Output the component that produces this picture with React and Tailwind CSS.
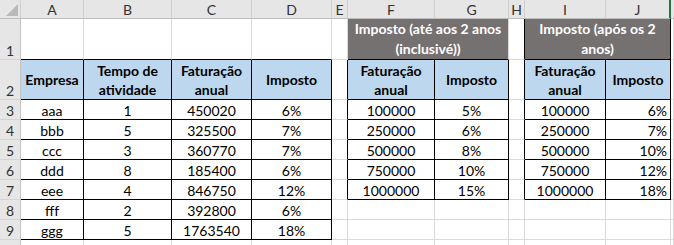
import clsx from "clsx";

const table1 = [
  ["aaa", "1", "450020", "6%"],
  ["bbb", "5", "325500", "7%"],
  ["ccc", "3", "360770", "7%"],
  ["ddd", "8", "185400", "6%"],
  ["eee", "4", "846750", "12%"],
  ["fff", "2", "392800", "6%"],
  ["ggg", "5", "1763540", "18%"],
];

const table2 = [
  ["100000", "5%"],
  ["250000", "6%"],
  ["500000", "8%"],
  ["750000", "10%"],
  ["1000000", "15%"],
];

const table3 = [
  ["100000", "6%"],
  ["250000", "7%"],
  ["500000", "10%"],
  ["750000", "12%"],
  ["1000000", "18%"],
];

// one spreadsheet cell; br / bb switch the right and bottom edge to a black border
function Cell({ children, br, bb, className }) {
  return (
    <div
      className={clsx(
        "flex min-w-0 border-r border-b whitespace-nowrap",
        br ? "border-r-black" : "border-r-[#dadada]",
        bb ? "border-b-black" : "border-b-[#dadada]",
        className
      )}
    >
      {children}
    </div>
  );
}

function RowNum({ n, className }) {
  return (
    <div
      className={clsx(
        "flex justify-center border-r border-b border-r-[#c4c4c4] border-b-[#d4d4d4] bg-[#e6e6e6] text-[#333] leading-[16px]",
        className
      )}
    >
      {n}
    </div>
  );
}

function ColHead({ label, last }) {
  return (
    <div
      className={clsx(
        "flex items-center justify-center border-b border-b-[#bdbdbd] bg-[#e6e6e6] text-[#333]",
        last ? "border-r-2 border-r-[#217346]" : "border-r border-r-[#cfcfcf]"
      )}
    >
      {label}
    </div>
  );
}

const head = "items-center justify-center text-center bg-[#bdd7ee] font-bold leading-[19px]";
const data = "items-end justify-center leading-[16px]";

export default function App() {
  const rows = [];

  // data rows 3..9
  for (let i = 0; i < 7; i++) {
    const t1 = table1[i];
    const t2 = table2[i];
    const t3 = table3[i];
    rows.push(
      <RowNum key={`rn${i}`} n={i + 3} className="items-end" />,
      <Cell key={`a${i}`} br bb className={data}>{t1[0]}</Cell>,
      <Cell key={`b${i}`} br bb className={data}>{t1[1]}</Cell>,
      <Cell key={`c${i}`} br bb className={data}>{t1[2]}</Cell>,
      <Cell key={`d${i}`} br bb className={data}>{t1[3]}</Cell>,
      <Cell key={`e${i}`} br={!!t2} className={data} />,
      <Cell key={`f${i}`} br={!!t2} bb={!!t2} className={data}>{t2 && t2[0]}</Cell>,
      <Cell key={`g${i}`} br={!!t2} bb={!!t2} className={data}>{t2 && t2[1]}</Cell>,
      <Cell key={`h${i}`} br={!!t3} className={data} />,
      <Cell key={`i${i}`} br={!!t3} bb={!!t3} className={data}>{t3 && t3[0]}</Cell>,
      <Cell key={`j${i}`} br={!!t3} bb={!!t3} className="items-end justify-end pr-[3px] leading-[16px]">
        {t3 && t3[1]}
      </Cell>,
      <Cell key={`k${i}`} />
    );
  }

  return (
    <div className="h-[245px] w-[674px] overflow-hidden bg-white font-['Lato','Liberation_Sans',sans-serif] text-[14px] text-black">
      <div className="grid grid-cols-[21px_63px_88px_80px_80px_16px_87px_74px_16px_81px_65px_1fr] grid-rows-[19px_41px_40px_repeat(8,20px)]">
        {/* column letters */}
        <div className="relative border-r border-b border-r-[#cfcfcf] border-b-[#bdbdbd] bg-[#e6e6e6]">
          <svg className="absolute right-[2px] bottom-[2px]" width="12" height="12" viewBox="0 0 12 12">
            <polygon points="12,0 12,12 0,12" fill="#b9b9b9" />
          </svg>
        </div>
        {["A", "B", "C", "D", "E", "F", "G", "H", "I", "J"].map((l) => (
          <ColHead key={l} label={l} last={l === "J"} />
        ))}
        <div className="border-b border-b-[#bdbdbd] bg-[#e6e6e6]" />

        {/* row 1 */}
        <RowNum n={1} className="items-end" />
        <Cell bb />
        <Cell bb />
        <Cell bb />
        <Cell bb />
        <Cell />
        <Cell bb className="col-span-2 items-end justify-center bg-[#767171] text-center font-bold leading-[20px] text-white">
          Imposto (até aos 2 anos
          <br />
          (inclusivé))
        </Cell>
        <Cell br />
        <Cell br bb className="col-span-2 items-end justify-center bg-[#767171] text-center font-bold leading-[20px] text-white">
          Imposto (após os 2
          <br />
          anos)
        </Cell>
        <Cell />

        {/* row 2 */}
        <RowNum n={2} className="items-end" />
        <Cell br bb className={head}>Empresa</Cell>
        <Cell br bb className={head}>
          Tempo de
          <br />
          atividade
        </Cell>
        <Cell br bb className={head}>
          Faturação
          <br />
          anual
        </Cell>
        <Cell br bb className={head}>Imposto</Cell>
        <Cell br />
        <Cell br bb className={head}>
          Faturação
          <br />
          anual
        </Cell>
        <Cell br bb className={head}>Imposto</Cell>
        <Cell br />
        <Cell br bb className={head}>
          Faturação
          <br />
          anual
        </Cell>
        <Cell br bb className={head}>Imposto</Cell>
        <Cell />

        {rows}

        {/* row 10, only its top edge shows */}
        <RowNum n="" />
        {["a", "b", "c", "d", "e", "f", "g", "h", "i", "j", "k"].map((k) => (
          <Cell key={`r10${k}`} />
        ))}
      </div>
    </div>
  );
}
